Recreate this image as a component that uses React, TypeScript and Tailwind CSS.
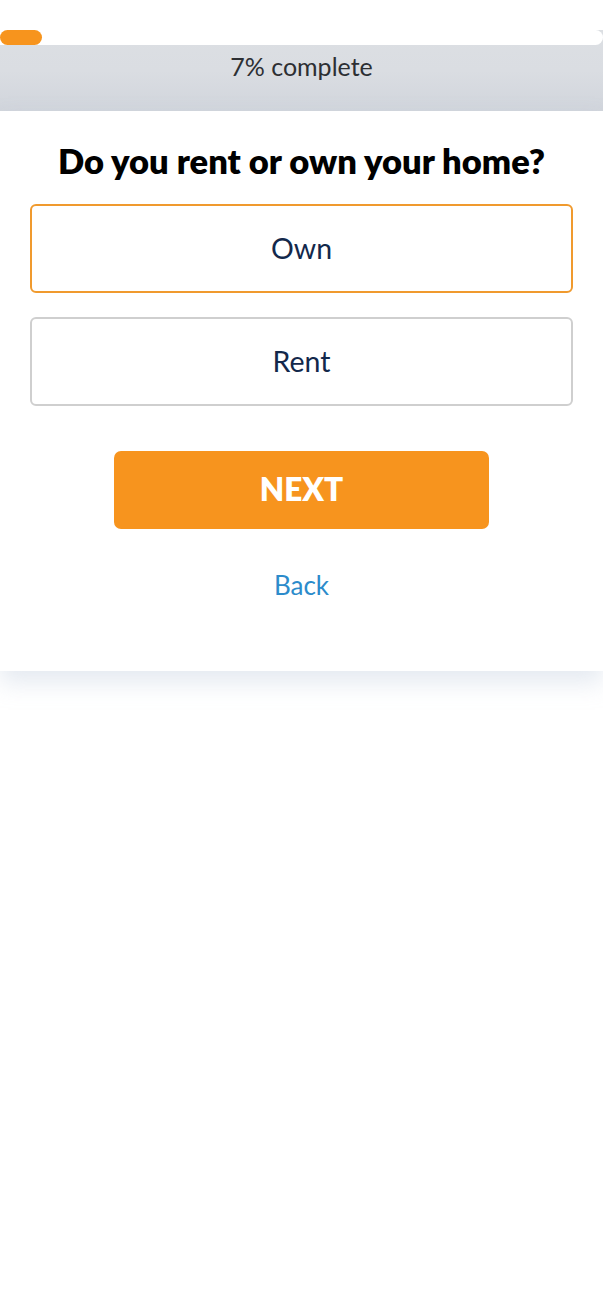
import React from "react";

export default function App() {
  return (
    <div className="min-h-[1311px] bg-white" style={{ fontFamily: "Lato, 'Noto Sans', sans-serif" }}>
      <div className="h-[30px] bg-white" />
      <div className="bg-gradient-to-b from-[#dcdfe3] via-[#dadde2] to-[#d1d5dc]">
        <div className="h-[15px] bg-white rounded-r-full relative">
          <div className="absolute left-0 top-0 h-[15px] w-[42px] rounded-full bg-[#f7941d]" />
        </div>
        <div className="h-[66px] pt-[6px] text-center text-[25px] leading-[30px] text-[#2d2f33]">
          7% complete
        </div>
      </div>
      <div className="bg-white shadow-[0_12px_22px_rgba(180,195,215,0.35)] px-[30px] pt-[30px] pb-[68px] flex flex-col items-center">
        <h1 className="text-[34.5px] leading-[40px] font-extrabold text-black text-center whitespace-nowrap">
          Do you rent or own your home?
        </h1>
        <button className="mt-[23px] w-full h-[89px] rounded-[6px] border-2 border-[#f09a2e] bg-white text-[28.5px] text-[#13284b]">
          Own
        </button>
        <button className="mt-[24px] w-full h-[89px] rounded-[6px] border-2 border-[#cfcfcf] bg-white text-[28.5px] text-[#13284b]">
          Rent
        </button>
        <button className="mt-[45px] w-[375px] h-[78px] rounded-[7px] bg-[#f7941e] text-white text-[31.5px] font-extrabold">
          NEXT
        </button>
        <div className="mt-[38px] text-[26px] leading-[36px] text-[#2c8bcb]">Back</div>
      </div>
    </div>
  );
}
